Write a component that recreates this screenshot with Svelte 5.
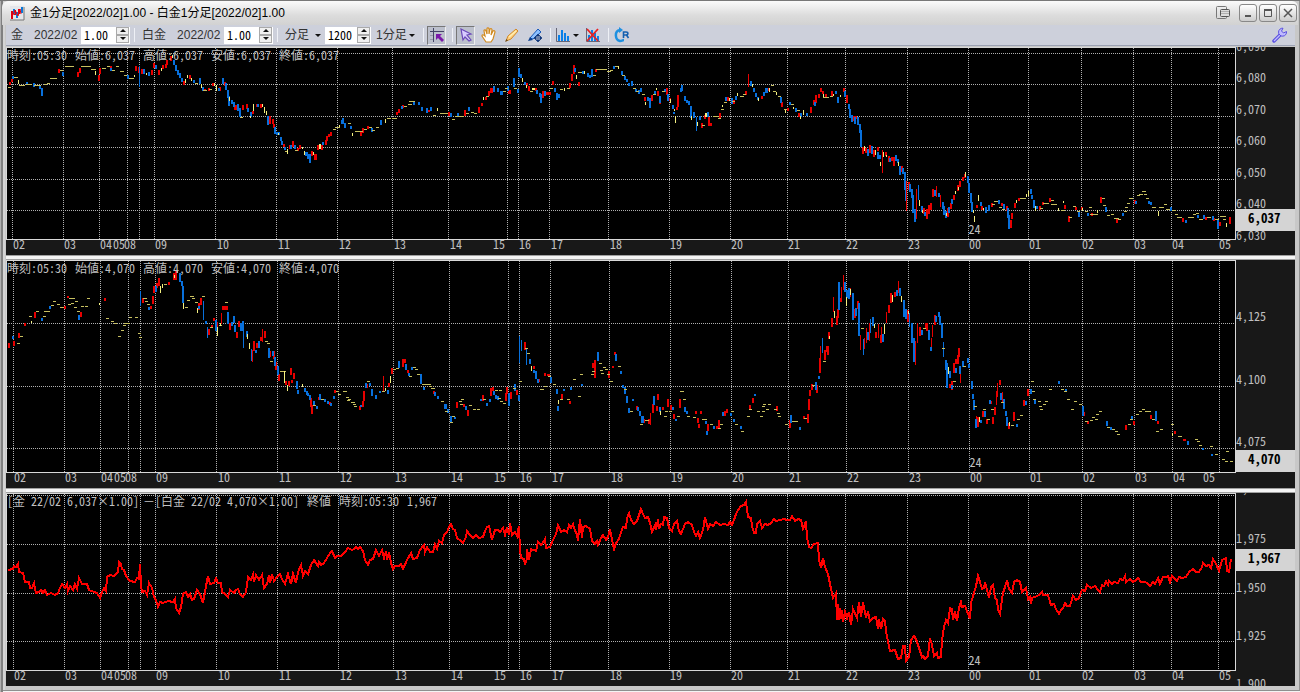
<script>
  const hours = ['02', '03', '04', '05', '08', '09', '10', '11', '12', '13', '14', '15', '16',
    '17', '18', '19', '20', '21', '22', '23', '00', '01', '02', '03', '04', '05']

  // candles: colour, x, y, height and, when it differs from the default, width
  const gold = `y8,87,1 r9,82,3 r11,79,3 b12,76,3 y14,77,1,4 y18,80,4 y19,85,1,6 b26,82,3 y26,84,1,6 b33,83,4 y34,85,1,7
    b39,85,4 b41,88,8,2 y44,84,1 y47,83,1 y50,78,1,7 r58,69,4 y60,70,1 b62,72,4 y65,66,1,9 r77,72,5 r79,68,5 y81,66,1,10
    y91,69,1,5 y95,71,4 r98,75,6 r99,68,6 y102,68,1,4 y107,66,1 r110,66,3 b110,68,3 y112,70,1 y116,66,1 y120,71,1,4
    y124,75,1 b127,75,4 y129,78,1,5 y134,75,2 r135,66,5 r138,67,6 b139,66,21 r141,69,5 b143,69,5 y146,73,2 b148,72,4
    r151,70,5 r153,63,5 b155,65,4 r158,70,5 y161,68,3 r162,65,4 r165,64,4 r166,60,5 r170,56,5 y172,55,3 b173,60,5
    b175,65,6 b177,70,5 b179,73,5 b181,78,4 r183,81,4 y185,79,4 y187,75,3 r189,75,4 y191,78,3 b193,80,3 y195,83,1
    b199,78,6 y201,84,4 b202,87,4 r204,89,2 y203,90,1,4 r208,88,3 y209,89,1 r212,83,3 y214,83,3 y216,85,6 b218,88,3
    r219,87,4 b222,78,6 r224,82,4 b225,83,7 b227,90,8 b228,96,10 y229,97,4 b231,100,4 b233,102,5 r234,107,3 r235,105,5
    b237,104,7 b239,108,9 y240,117,1 r242,105,5 r246,104,5 b247,108,4 b250,112,5 y250,116,2 r252,111,3 y253,104,7
    r256,104,3 b257,104,3 r260,104,4 y262,104,3 y264,107,6 y266,111,4 b267,116,9,2 r269,116,8 r272,119,5 r273,124,4
    b274,127,7 b276,132,3,4 y278,133,2 b280,137,4 b281,141,4 r283,144,3 b284,147,3 y285,151,1 y287,149,5 r289,145,4
    b290,145,4 r292,141,6 b294,145,4 y295,150,1 r297,148,3 r299,145,4 y302,147,2 y304,151,4 b305,152,4,3 b307,154,5,3
    b309,154,9,2 r311,151,5 y313,152,3 r314,154,6,3 r317,145,5 y319,144,5,2 r321,145,5 b322,142,3 r325,140,5 r326,136,5
    r328,134,3 r330,132,4 y333,129,1 y335,127,1 y337,127,1 y339,125,2 b341,120,4 b342,118,6 b344,123,5 y348,123,1
    b350,126,3 y352,133,3 y355,131,1,8 r360,132,4 r362,128,5 y364,129,1 r367,126,3 y369,127,1 b371,128,4 y372,130,1
    y376,127,1 b380,120,5 y385,119,4 y387,118,1,4 y392,118,1,5 r396,112,3 r398,109,4 b401,106,3 r402,105,3 y404,106,1,3
    y408,104,1,4 y409,101,1,6 b413,102,3 b418,102,3 b421,107,4 b426,108,5 r428,110,2 b430,107,4 y433,115,1 y437,108,3
    y440,113,1,8 r448,112,4 b450,113,4 y452,119,1 b457,113,3 y455,116,1,9 r464,110,6 y466,113,1 b468,107,4 y471,112,1
    y474,113,1 r478,107,6 r481,103,3 y483,97,3 r485,97,3 y486,96,1 r488,91,5 r490,88,5,3 b493,86,6 b497,88,4,2
    b500,91,4,3 y503,91,1 y505,88,1 b507,86,5 r508,90,4,3 b513,78,9 y514,88,1 b517,89,4 b518,68,9 b520,74,4 y522,78,4
    b524,82,3 r526,83,3 y526,85,3 r528,86,5 y530,91,1 y532,88,2,3 r535,88,3 b536,90,4 b539,93,4 b540,94,9,2 r542,91,7
    b544,91,5 r546,92,3 r548,92,3,3 y550,88,1 r552,81,4 b554,88,4 b556,93,7 b558,94,4 y560,89,1,3 y564,88,3 y567,88,1,3
    r569,83,5 r571,74,7 r573,65,9 b574,68,4 y576,75,4 r578,82,4 y578,72,1,4 b582,71,3 y584,71,3 b587,73,4 b589,75,3
    b591,69,8,2 y593,75,1 r595,69,3 y596,69,1,11 y607,71,1,4 y610,70,1,3 b613,66,3 y615,66,1,3 y618,66,3 b621,71,4
    y622,75,1 b624,76,4 b626,79,3 b628,83,3 b631,81,5 y633,88,1 b635,89,3 y636,91,1 b638,90,4 b640,88,4 y642,94,1
    r644,97,4 y645,102,3 b647,97,4 b649,98,10 r651,95,6 y653,94,1 b654,91,3 y656,88,2 r657,91,5 b659,96,7 r659,100,4
    y662,91,1 b664,89,3 r666,88,7 b667,94,7 r669,98,3 y670,99,4 b672,105,4 y674,109,2 b673,112,2 y675,116,7 r676,107,3
    r677,95,12,2 b680,88,4 b681,85,6 b684,96,5 b686,100,3 b688,101,4 b690,106,12,2 y691,116,4 b693,112,6 b696,117,14
    y697,122,4 b699,116,4 r701,123,5 y702,125,1 r704,115,4 y705,113,4,2 r708,117,9 b707,112,5 r710,123,3 y713,116,1,6
    y718,118,1 r719,113,5 y721,109,1 y722,105,2 y724,102,1 b725,97,4 r726,97,4,3 y729,98,3 b731,98,6 y732,101,1
    r733,100,4 b735,96,4 y737,93,3 y740,96,1,4 y743,94,1 r745,91,4 r748,74,13 b750,81,5 y752,84,3 b753,88,4 b755,93,4
    b757,97,3 y758,98,3 r761,96,3 b763,92,4 b765,88,5,3 r767,88,3 y769,88,4 y771,85,1 y773,91,1 y776,92,3 y778,96,1
    b780,97,6,2 r781,102,5 y784,109,1 y785,110,3 r787,108,3 b789,102,3 y791,104,1 y793,107,2 b795,108,4 y797,110,1
    r798,113,4 b800,113,4 y800,116,3 y803,110,5 b806,113,3 r810,107,6 r813,100,5 b814,102,4 r815,95,8,2 r818,94,4
    r820,88,4 r822,91,3 y823,94,3 r825,94,4 y823,97,1,6 y830,96,1 r831,91,5 y833,94,2 b835,91,3 b837,97,6 y840,95,2
    r843,88,4 b844,91,6 r846,95,8 b848,104,5 b849,109,9 b851,115,7 r852,116,5 b854,117,7 r853,116,3,4 b857,117,8
    b859,124,9 b860,130,17,2 r862,147,7 y864,146,5 r865,148,5 b867,149,7,2 r869,145,8 b871,146,8 r873,150,7 y875,150,5
    b877,152,7 r877,147,4 b879,155,4 y880,162,4 r882,150,23 y883,152,5 r885,152,4 y886,155,2 r888,156,6 r891,157,4
    b889,158,4 r893,157,9 b895,155,6 b897,159,4 y898,162,4 b899,166,9 r901,166,6 b902,168,6 b904,172,18,2 b905,184,17
    r906,181,30 r908,182,8 b909,184,8,2 b911,189,9 b912,195,18,2 b914,209,13,2 r916,189,30 b918,185,15 y919,200,6
    b921,206,6 y922,210,3 r923,208,6 b924,212,4 r926,209,10 r928,205,9,2 r930,203,7 r932,189,8 b934,190,6 r936,186,11
    b938,193,4 r940,195,12 b942,202,7 b943,206,9 b945,211,7 y946,213,3 r947,208,9 b948,207,6 r950,203,6 b951,199,5
    r953,195,5 y955,191,3 r957,185,6,2 y958,187,3 r959,181,6 r962,177,4 r964,174,4 y965,172,5 b967,176,7 b968,183,10
    b970,193,10 b971,202,10 y974,216,6 y973,210,3 r976,205,3 y978,195,6 b980,202,4 r981,206,4 y983,208,2 b985,207,6
    b988,205,6,2 r991,203,4 y992,204,1 y994,201,1,4 b998,200,4 y999,207,1 r1001,203,3 b1003,204,6 y1002,209,1
    r1006,206,5 b1007,208,10 b1008,215,14,2 r1010,220,8 r1011,213,6 r1014,203,5 y1016,200,3 r1018,198,3 y1020,198,1,6
    y1026,194,3 y1028,191,5 b1030,189,5 b1031,195,4 b1033,200,8,2 y1035,206,5 b1036,206,3 r1039,206,4 y1040,208,1
    r1042,202,3 y1043,203,1,6 r1049,198,4 y1051,200,1 y1051,204,1,6 y1058,208,3 y1063,201,2 r1064,205,4 y1061,210,1,4
    r1068,216,6 y1069,217,1,3 y1073,206,1 r1075,207,3 b1078,212,5 y1077,211,1 r1081,207,3 y1082,208,3 y1085,211,1
    b1087,213,3 y1089,207,1 r1091,213,3 y1090,214,1,8 y1097,210,3 r1100,197,6,2 y1102,198,1 y1103,205,1 b1105,207,5
    y1107,215,1 y1111,214,1 r1116,219,4 y1114,218,1,5 y1118,219,1 b1122,213,3 y1124,211,1 y1125,207,1,3 y1127,203,1
    y1129,198,1,4 r1134,200,4 b1135,201,3 y1137,195,1 y1139,194,1,4 y1142,191,1,4 y1144,194,1 y1146,198,1 b1148,201,3
    b1150,202,3 y1152,207,1,4 y1158,211,5 y1159,207,1,5 y1164,204,1 y1166,209,1,4 b1170,207,4 y1172,210,1,4 y1175,214,1
    y1177,217,1,5 r1182,218,4 b1185,220,3 y1188,217,1,6 y1193,214,1 y1196,213,1 b1197,215,3 y1199,219,1,4 b1203,215,4
    r1205,217,3 y1207,217,1,4 b1212,216,4 r1213,218,3 y1215,219,1,4 b1217,219,10,2 r1219,222,4 y1220,216,1,6 y1223,219,1
    y1226,223,4 r1229,217,7`

  const platinum = `r8,343,5 b12,336,3 r13,341,5 y17,343,1 r18,333,5 y20,336,1 r24,323,3 y29,316,1 y31,321,2 r34,312,6
    y36,311,1 b41,318,3 y43,316,1 y44,311,1,6 b49,306,3 y51,305,1 y53,301,1,3 y57,304,1 y60,307,1,4 r64,306,3 r67,296,2
    y69,298,1 y68,304,1 y71,303,1 y72,298,1 y75,301,1 y74,307,1 y77,311,1 r80,312,5 b78,315,5 y81,306,1 y85,306,1
    y87,298,1 y99,303,2 r104,298,3 y106,318,1 y111,321,1 y114,323,1 y118,336,1 y121,330,1 y123,325,1 y124,323,1,6
    y129,317,1 y135,317,1 y138,333,1 y139,337,1 b140,291,15 r142,298,5 y143,298,1,4 y145,301,1 y147,304,1 b148,307,3
    r150,306,3 r152,296,8 r153,286,7,2 b155,286,6 r156,283,5 r158,278,8 y160,286,7 y162,284,4 y164,284,1,3 r168,282,3
    r173,273,7 y174,275,3 r175,270,10 y177,271,2 b179,273,9 b181,281,5 b182,286,17,2 y183,303,6 y185,307,1 y187,300,1
    y190,296,1,4 y192,298,1 y195,302,1 r198,303,7 y197,308,5 b198,306,3 r200,298,7 y202,296,1 b203,301,19 b205,321,3
    b207,327,11 r208,329,6 y210,327,1 r211,325,3 r213,318,3 b215,320,11,2 r216,322,6 y217,327,9 y219,325,1 y220,323,3
    r221,313,11 r222,306,4,6 y225,302,1 b227,312,12,2 r229,323,7,2 b231,322,4 b233,316,7 b234,325,7 r236,332,6
    r238,321,6 b240,323,8 b242,321,10 b243,322,26 b246,331,6 y247,334,5 y249,343,6 b251,349,12 r252,350,12 r253,341,10
    r256,343,5 b255,350,3 b258,341,7 r260,337,4 r262,329,13 r264,331,7 y265,341,1 y267,343,1 b268,348,10 r269,351,6
    y270,361,1 b272,351,5 r273,351,8 b274,357,9,2 r275,362,8 b277,366,9,2 r278,374,7 y280,371,1 y282,371,1,4 y284,371,12
    r285,381,4 y287,385,6 r288,381,5 r290,368,7 r291,380,3 r293,373,6 b296,381,8 b297,390,4 y302,384,3 b304,388,4
    b306,391,4 b307,393,3 b309,395,5 r310,398,9 b313,401,5 r311,405,9 y313,405,1 b316,406,3 r318,397,3 b319,394,6,2
    y321,399,1 b324,399,3 b327,401,3 r329,402,3 b330,403,3 b333,396,3 r334,390,3 y336,391,1 y338,394,1 y343,391,1,4
    y346,397,1 y347,400,1 y348,399,1 y351,402,1,4 y353,404,1 y354,406,1 r359,406,4 b360,405,2 r362,401,6 r363,391,10
    b365,383,5 r366,384,4 y367,381,1 b369,383,3 b371,389,7 b375,395,4 b379,391,2 r383,376,15 y382,391,1 y385,388,3
    b387,390,4 r388,383,4 y390,376,7 r391,368,6 y393,369,1 y396,368,1 b398,361,7 r402,359,8,2 r404,359,4 b405,364,6
    r407,370,3 b408,373,3 y409,376,1 b411,367,3 y413,367,1 y415,369,1 y417,374,1 b420,374,10 y422,384,1,5 b423,387,3
    y426,384,1,5 y429,386,1 r433,391,3 y431,388,1,4 b434,392,4 b437,396,3 y441,401,1 b444,404,5,3 b447,409,4,2
    y445,411,1 b450,416,6 y450,422,1 b454,417,2 y452,416,1 r456,402,6,2 y459,401,1 y461,399,1 y460,404,1 r463,404,3
    b465,406,4 r467,410,6 y469,405,1 y473,409,1 y477,409,1 b480,399,2 r482,395,6 y483,399,1 b486,403,3 b489,399,3
    r490,388,8 r492,387,4 b493,391,4 y495,390,1,3 b497,396,4 b495,395,4 y498,398,1 y499,390,1 y500,401,1 y503,403,1
    r505,393,8 r506,387,7,2 b508,393,13,2 r510,392,7 y513,388,1,3 b514,384,7 r516,390,5 b518,395,6 y519,381,1
    b519,336,27 b521,340,11 r524,342,8 b526,349,16 y525,348,1 y527,353,1 b529,359,5 y531,366,5 b533,370,3 r533,366,3
    b535,371,8,2 b537,379,4 r538,379,3 y540,389,1,4 y544,386,1 r544,373,3 r547,374,2,3 b550,377,6 y548,376,1 y553,384,1
    b556,389,5 y558,400,4 b557,406,5 r561,394,5 y560,399,1 b563,389,2 y567,399,1 r569,401,3 b570,387,3 y573,379,1
    y578,396,1 y580,374,1 b581,384,2 y591,374,1 r592,363,5 y592,371,1,3 r594,360,18,2 b597,352,9,2 y599,363,1 y600,370,1
    y603,367,1 y601,373,1 y605,369,1 y607,374,1 r608,371,7 y610,381,1 r612,366,2 r614,352,3 b615,354,7 y618,366,1
    b620,371,3 b622,385,3 b624,387,7 y624,389,1,3 b626,396,7,2 b628,408,5 y630,411,1 b632,399,2 r636,406,4 b637,407,4
    b639,411,5 b641,416,7,3 y640,424,1 r643,419,4 y645,420,1,4 r648,419,5 r650,413,12 r652,404,9 b653,396,9 r656,406,5
    r657,394,6 b659,407,5 y660,411,4 r662,407,3 y664,416,1 y665,411,1 r667,399,8 y669,411,1 r670,405,5 b672,407,3
    r673,414,5 b675,419,2 y677,416,1 r679,399,9 y680,391,1,4 y683,399,1 b684,407,5 b686,411,3 y687,416,1,3 y693,417,1
    r695,411,3 r700,411,3 r697,418,5 r698,424,4 y702,419,1 y704,419,1,3 b705,421,3 r707,424,7 b706,431,4 y710,424,1
    b713,426,3 r716,426,3,2 r718,420,8,2 y718,428,1,3 b722,412,4 y720,424,1 r724,411,5,2 r726,409,4 b730,413,3
    y731,411,1 b733,419,3 y735,424,1,3 b740,426,3 y741,431,1 y747,416,1 r749,405,5 y749,409,1 r752,398,5 b754,394,2
    y757,411,1 y760,416,1,3 y762,406,1,3 y762,411,1 y763,404,1 y766,409,1 y768,404,1 y774,409,1 r776,406,5 y777,413,1
    y778,416,1 y785,424,1 b790,415,8 r789,420,8 y792,421,1 y795,421,1 b799,427,3 r803,416,3 y804,418,1 r807,414,9
    r808,399,11,2 r809,390,6 r811,384,6,2 y812,385,1 b815,382,8 r816,385,8 b818,376,3 r819,358,15,2 r820,346,16
    b822,338,15 r824,350,10 y823,361,1 r826,346,6 r827,346,9 r828,332,7 y829,336,3 r831,318,9 r833,297,15 y834,311,7
    r836,316,9 r837,309,9 b838,282,28,2 r840,298,4 r841,287,14 r843,275,15 b844,282,10 b846,290,8 y846,297,9
    b848,288,11,2 r849,288,9 y850,289,6 b852,293,27,2 r854,309,9 b855,308,8 r857,301,8 b858,303,33,2 r860,335,15
    y861,328,1 b863,339,16 r864,338,11 r866,328,15 b867,332,8 r869,323,18 b870,319,14 b872,317,9,2 y874,324,4 r875,332,6
    r878,324,14 r880,335,8 r881,327,11 b882,334,8 y884,324,10 r886,312,11 r888,305,8 r890,293,10,2 y892,295,7 r894,292,5
    b896,290,6 r898,281,12 b899,288,8,2 y901,296,6 b903,300,17,2 b905,309,10 r907,310,12,2 y908,311,3 b909,313,14
    b911,323,20,2 b913,338,24,2 r915,341,24 r917,323,20 r919,327,9 b921,330,5 y923,328,1 r925,323,5 r926,323,8
    b928,330,10 b930,347,4 r931,338,11 r932,325,12 r934,315,10 b935,316,6 b938,312,5 b939,316,9 b941,323,15,2 y942,348,1
    b943,342,15 b945,360,10 b946,363,25,2 y948,367,7 b949,371,7 r949,384,4 b951,385,4 r951,381,9 y953,381,1 r953,363,10
    r955,359,5 b955,368,5 r957,355,9 r958,348,9 b959,366,8 r960,372,11 b962,361,6 y963,366,1 b967,358,5 b968,364,4
    b971,381,8 b972,394,5 b973,400,10 y974,406,1 r976,416,12 b975,419,9 r977,417,10 y979,417,5 b980,420,3 r982,411,6
    y983,409,1 b984,411,6 r986,419,5 y987,419,1 b989,400,4 r990,401,3 y991,409,1 r992,417,7 r994,407,8 r996,391,14
    r997,383,14 r999,380,5 b1000,393,7 r1002,392,11 y1001,402,1,3 b1003,399,10 b1005,411,5 b1006,417,9 r1008,423,6
    y1009,422,4 y1011,425,1 r1013,412,9 b1016,424,3 y1017,419,1 y1020,415,1 r1023,400,6 b1025,401,4 r1027,389,7
    b1030,389,5 y1031,381,1 y1032,391,1 b1034,399,5 y1033,399,1 y1038,401,1 y1039,406,1 y1040,409,1 y1043,404,1
    y1045,401,1 y1049,389,1 b1058,381,3 y1061,389,1 y1064,391,1 b1065,389,2 y1067,399,1 y1071,409,1 y1074,401,1
    y1079,404,1 b1082,406,10 r1083,412,4 y1085,421,1 r1087,421,3 y1090,420,1 y1092,417,1 y1095,419,1 y1096,414,1
    y1099,411,1 b1106,421,5 y1107,427,1 b1110,427,3 y1112,429,1 y1115,431,1 y1117,434,1 r1125,425,5 y1128,424,1
    b1131,416,3 y1130,419,1,3 r1133,421,4 y1136,414,1 y1139,411,1 y1142,409,1 y1145,411,1 y1148,411,1 r1150,415,4
    y1152,419,1 b1155,411,10 r1157,421,3 y1156,431,1 y1160,429,1 y1171,424,1 y1172,433,3 r1174,431,3 y1178,436,1,4
    r1183,439,2,3 b1187,441,4 y1195,439,1 y1197,441,1 y1199,445,1 b1202,448,2 y1210,446,1 b1211,454,2 y1215,454,1
    y1222,459,1 y1225,461,1 y1226,451,1 y1230,461,1`

  const spread = `8,570 13,569 14,566 16,567 18,564 19,572 23,573 25,582 29,582 30,588 32,588 34,583 36,593 39,592 41,590
    43,593 45,590 47,595 51,593 55,595 58,593 60,588 62,584 65,588 67,584 68,591 70,586 73,590 75,584 77,589 79,578 82,584 87,584
    89,590 94,592 97,593 100,598 102,592 104,588 106,591 107,577 110,575 114,576 118,572 119,562 121,564 122,569 124,570
    126,576 130,581 135,582 137,578 139,579 140,564 141,585 142,592 145,591 147,595 149,583 152,588 154,597 156,600
    158,607 160,602 163,603 168,601 173,602 175,599 176,608 179,613 181,607 183,594 186,592 188,597 190,594 192,600
    194,599 197,590 200,594 203,603 206,586 208,576 210,584 214,583 216,578 218,583 221,583 222,592 225,594 228,597
    230,590 234,593 236,590 238,589 240,594 243,597 246,592 248,577 251,580 253,575 254,582 256,575 259,580 262,575
    264,588 267,584 269,575 270,583 272,574 274,581 277,577 280,574 282,579 285,584 288,574 291,584 293,574 296,583
    298,572 301,565 303,576 305,571 308,574 311,565 314,560 318,566 319,562 321,565 324,563 327,558 330,553 332,551
    335,558 337,556 341,556 345,552 348,548 352,550 354,549 356,547 358,549 360,547 363,551 365,560 368,565 370,560
    373,559 376,550 379,556 382,550 384,558 386,551 387,560 389,552 391,563 393,569 395,566 399,566 401,564 403,569
    407,560 411,553 413,559 417,558 420,550 424,545 425,552 427,547 430,552 433,552 435,544 437,549 439,541 442,543
    444,535 447,532 449,527 451,524 453,529 455,530 457,538 461,541 463,543 466,537 467,531 470,535 473,538 476,535
    479,538 483,537 485,531 487,527 489,526 491,535 492,540 495,530 498,530 500,532 503,528 505,535 507,527 509,535
    510,523 512,535 515,532 517,536 519,526 520,550 521,558 524,559 525,565 527,558 527,549 529,560 531,549 536,551
    538,542 541,545 544,541 545,539 546,548 550,547 553,540 556,534 558,525 561,532 564,530 567,532 569,525 571,528
    573,524 575,531 577,534 578,541 580,519 582,538 583,527 586,526 590,529 592,541 595,544 597,541 598,545 601,538
    603,535 606,540 608,537 610,529 612,540 614,549 616,543 619,539 621,532 623,527 626,528 627,518 629,513 631,520
    634,524 637,521 639,515 641,509 643,514 645,518 648,517 650,523 652,532 655,525 656,530 658,519 659,529 661,524
    663,525 664,517 667,518 669,528 672,531 674,524 677,521 679,531 681,534 683,529 685,524 688,522 692,525 694,532
    696,536 698,532 700,538 703,530 705,517 708,529 710,524 713,526 716,522 720,525 724,524 728,525 730,522 732,525
    734,520 736,514 738,510 741,506 744,505 746,502 748,517 751,518 752,526 754,533 756,533 757,524 760,521 762,528
    765,524 768,525 771,523 774,519 776,521 780,520 784,519 787,520 790,520 792,516 795,521 798,519 801,520 803,529
    806,521 807,538 809,547 811,548 814,544 818,543 819,560 821,568 823,558 825,567 828,574 831,589 833,598 836,593
    837,620 838,604 839,620 840,608 841,619 842,610 843,622 845,612 847,618 849,612 851,625 853,609 857,618 859,602
    861,617 863,602 866,618 868,611 870,621 873,618 876,617 878,629 879,619 881,629 883,619 885,621 886,631 888,642
    890,651 895,650 898,659 901,658 903,646 905,646 906,661 909,657 911,640 914,636 916,639 919,648 922,657 923,656
    925,659 928,656 930,638 932,645 934,656 937,653 938,658 941,657 942,640 944,627 946,620 948,623 950,608 952,609
    953,620 955,611 957,621 959,608 961,602 962,607 965,606 967,611 970,619 971,603 974,593 976,586 978,576 980,582
    982,589 984,588 985,582 987,590 989,598 991,587 993,585 995,598 997,600 998,610 1000,614 1002,600 1003,593 1005,587
    1007,580 1009,589 1012,593 1014,582 1017,580 1020,582 1022,592 1026,588 1028,599 1030,597 1031,604 1032,598 1037,596
    1039,595 1042,592 1043,595 1048,595 1051,605 1054,604 1056,609 1059,614 1061,610 1063,608 1065,603 1067,606 1070,606
    1073,596 1076,600 1079,598 1082,590 1085,591 1087,585 1091,588 1095,586 1098,590 1100,592 1102,585 1104,586 1106,581
    1108,585 1109,581 1112,584 1114,582 1118,583 1120,579 1123,580 1125,576 1126,582 1130,579 1133,582 1136,580 1138,578
    1141,582 1145,582 1147,583 1150,586 1153,582 1155,584 1158,578 1160,584 1163,577 1166,577 1168,576 1170,582 1172,576
    1175,579 1177,581 1179,577 1182,578 1186,577 1189,572 1193,569 1196,572 1199,572 1202,567 1203,563 1206,566 1209,565
    1211,568 1213,559 1216,564 1219,571 1222,560 1226,558 1227,571 1229,572 1231,559`

  const charts = [
    {
      id: 'gold', top: 47, height: 208, candles: gold,
      legend: ['時刻:05:30', '始値:6,037', '高値:6,037', '安値:6,037', '終値:6,037'],
      cols: [12, 63, 99, 127, 139, 154, 215, 276, 337, 392, 448, 507, 518, 549, 608, 669, 730, 787, 845, 907, 968, 1028, 1081, 1133, 1171, 1218],
      rows: [53, 84, 116, 147, 179, 210],
      ticks: [13, 64, 100, 113, 124, 155, 217, 278, 339, 394, 450, 493, 519, 551, 610, 670, 731, 788, 846, 908, 969, 1029, 1082, 1134, 1172, 1219],
      prices: [['6,090', 46], ['6,080', 77], ['6,070', 109], ['6,060', 140], ['6,050', 172], ['6,040', 203], ['6,030', 235]],
      last: '6,037', lastY: 220, dayX: 969
    },
    {
      id: 'platinum', top: 260, height: 228, candles: platinum,
      legend: ['時刻:05:30', '始値:4,070', '高値:4,070', '安値:4,070', '終値:4,070'],
      cols: [13, 64, 100, 128, 140, 155, 216, 277, 338, 393, 449, 508, 519, 550, 609, 670, 731, 788, 846, 908, 969, 1029, 1082, 1134, 1172, 1219],
      rows: [323, 386, 448],
      ticks: [14, 65, 101, 114, 125, 156, 218, 279, 340, 395, 451, 494, 520, 552, 611, 671, 732, 789, 847, 909, 970, 1030, 1083, 1135, 1173, 1203],
      prices: [['4,125', 316], ['4,100', 379], ['4,075', 441]],
      last: '4,070', lastY: 461, dayX: 970
    },
    {
      id: 'spread', top: 493, height: 193, line: spread,
      legend: ['[金 22/02 6,037×1.00]', '－[白金 22/02 4,070×1.00]', '終値', '時刻:05:30', '1,967'],
      cols: [13, 64, 100, 128, 140, 155, 216, 277, 338, 393, 449, 508, 519, 550, 608, 669, 730, 787, 845, 907, 968, 1028, 1081, 1133, 1171, 1218],
      rows: [495, 544, 593, 641],
      ticks: [14, 65, 101, 114, 125, 156, 218, 279, 340, 395, 451, 494, 520, 552, 610, 670, 731, 788, 846, 908, 969, 1029, 1082, 1134, 1172, 1219],
      prices: [['2,000', 488], ['1,975', 538], ['1,950', 587], ['1,925', 635], ['1,900', 683]],
      last: '1,967', lastY: 560, dayX: 969
    }
  ]

  function shape(list, colour, flat) {
    return list.trim().split(/\s+/)
      .filter(c => c[0] == colour)
      .map(c => c.slice(1).split(',').map(Number))
      .filter(([, , h]) => colour != 'y' || (h == 1) == flat)
      .map(([x, y, h, w]) => {
        w = w || (colour == 'y' ? (h == 1 ? 3 : 1) : (h > 10 ? 1 : 2))
        return `M${x} ${y}h${w}v${h}h${-w}z`
      })
      .join('')
  }

  const left = x => `${(x - 6) / 12.3}%`

  let goldRatio = '1.00'
  let platinumRatio = '1.00'
  let bars = '1200'
  let tool = 'select'

  const step = (value, by) => (Number(value) + by).toFixed(2)
</script>

<main>
  <header>
    <svg class="logo" width="16" height="16" viewBox="0 0 16 16">
      <rect x="1" y="1" width="14" height="14" fill="#e4e6ea" />
      <path d="M1 15h14V2" fill="none" stroke="#777" />
      <path d="M3 14V6M6 5v5M10 9V4" stroke="#e00010" stroke-width="2" />
      <path d="M5 9V4M8 13V7M13 8V2" stroke="#0878d8" stroke-width="2" />
      <path d="M4 10l2-5 3 6 2-7 1 5" fill="none" stroke="#e00010" />
    </svg>
    <h1>金1分足[2022/02]1.00 - 白金1分足[2022/02]1.00</h1>
    <svg class="detach" width="15" height="14" viewBox="0 0 15 14" fill="none" stroke="#777">
      <rect x=".5" y=".5" width="10" height="12" rx="1" />
      <rect x="4.500" y="3.500" width="9" height="7" rx="1" fill="#ddd" stroke="#555" />
      <path d="M5 5.500h8M5 7.500h8" stroke="#b0b0b0" />
    </svg>
    <button class="win" aria-label="最小化"><svg width="10" height="10"><path d="M2 8h6" stroke="#555" stroke-width="2" /></svg></button>
    <button class="win" aria-label="最大化"><svg width="10" height="10"><path d="M1.500 2h7v6.500h-7z" fill="none" stroke="#555" /><path d="M1 2h8" stroke="#555" stroke-width="2" /></svg></button>
    <button class="win" aria-label="閉じる"><svg width="10" height="10"><path d="M1 1l8 8M9 1L1 9" stroke="#555" stroke-width="1.500" /></svg></button>
  </header>

  <nav>
    <label class="name" for="gold-ratio">金</label>
    <span class="month">2022/02</span>
    <span class="spin">
      <input id="gold-ratio" bind:value={goldRatio}>
      <button aria-label="増やす" on:click={() => goldRatio = step(goldRatio, 0.01)}><i class="up"></i></button>
      <button aria-label="減らす" on:click={() => goldRatio = step(goldRatio, -0.01)}><i class="down"></i></button>
    </span>
    <hr>
    <label class="name" for="platinum-ratio">白金</label>
    <span class="month">2022/02</span>
    <span class="spin">
      <input id="platinum-ratio" bind:value={platinumRatio}>
      <button aria-label="増やす" on:click={() => platinumRatio = step(platinumRatio, 0.01)}><i class="up"></i></button>
      <button aria-label="減らす" on:click={() => platinumRatio = step(platinumRatio, -0.01)}><i class="down"></i></button>
    </span>
    <hr>
    <span class="drop"><select aria-label="足種"><option>分足</option></select><i class="down"></i></span>
    <span class="spin bars">
      <input aria-label="本数" bind:value={bars}>
      <button aria-label="増やす" on:click={() => bars = Number(bars) + 100}><i class="up"></i></button>
      <button aria-label="減らす" on:click={() => bars = Number(bars) - 100}><i class="down"></i></button>
    </span>
    <span class="drop wide"><select aria-label="間隔"><option>1分足</option></select><i class="down"></i></span>
    <hr>
    <button class="tool pressed" aria-label="カーソル追従">
      <svg width="16" height="16" viewBox="0 0 16 16"><path d="M4.500 1v14M1 4.500h14" stroke="#446" /><path d="M1 8.500h3M1 12.500h3" stroke="#99a" /><path d="M7 7h6l-2 2 4 4-2 2-4-4-2 2z" fill="#7a18a8" /></svg>
    </button>
    <hr>
    <button class="tool" class:pressed={tool == 'select'} aria-label="選択" on:click={() => tool = 'select'}>
      <svg width="16" height="16" viewBox="0 0 16 16"><path d="M3 2l10 5-4 1 4 5-2 1-4-4-2 3z" fill="#d8ccff" stroke="#6a48b8" stroke-width="1.200" /></svg>
    </button>
    <button class="tool" class:pressed={tool == 'hand'} aria-label="移動" on:click={() => tool = 'hand'}>
      <svg width="16" height="16" viewBox="0 0 16 16"><path d="M5 15L1 9c0-2 2-1 3 0L3 4c0-2 2-1 2 0l1 3V2c0-2 2-1 2 0v5l1-5c1-1 2 0 2 1l-1 5 2-4c1-1 2 0 2 1l-2 7-2 3z" fill="#fff" stroke="#d08a20" stroke-width="1.200" /></svg>
    </button>
    <button class="tool" class:pressed={tool == 'pencil'} aria-label="描画" on:click={() => tool = 'pencil'}>
      <svg width="16" height="16" viewBox="0 0 16 16"><path d="M2 14l2-5 8-7 2 2-7 8z" fill="#ffd080" stroke="#d08828" /><path d="M5 10l7-6" stroke="#fff0b0" stroke-width="1.500" /><path d="M1 15l1.500-3 1.500 1.500z" fill="#6a4818" /></svg>
    </button>
    <button class="tool" class:pressed={tool == 'pen'} aria-label="線の編集" on:click={() => tool = 'pen'}>
      <svg width="16" height="16" viewBox="0 0 16 16"><path d="M3 11l8-9 3 3-8 7z" fill="#8cc0ff" stroke="#1858b8" /><path d="M1 14l2-4 3 3z" fill="#0c4090" /><path d="M11 7v8M7 11h8M11 7l-2 2h4zM11 15l-2-2h4zM7 11l2-2v4zM15 11l-2-2v4z" fill="#103878" stroke="#103878" stroke-width=".6" /></svg>
    </button>
    <hr>
    <button class="tool more" aria-label="テクニカル">
      <svg width="16" height="16" viewBox="0 0 16 16"><path d="M1.500 1v13.500H15" fill="none" stroke="#667" /><path d="M4 14V8M7 14V3M10 14V6M13 14V9" stroke="#0a80e8" stroke-width="2" /></svg>
      <i class="down"></i>
    </button>
    <button class="tool" aria-label="テクニカル削除">
      <svg width="16" height="16" viewBox="0 0 16 16"><path d="M1.500 1v13.500H15" fill="none" stroke="#667" /><path d="M4 14V8M7 14V3M10 14V6M13 14V9" stroke="#0a80e8" stroke-width="2" /><path d="M2 2l11 12M13 2L2 14" stroke="#e82020" stroke-width="1.800" /></svg>
    </button>
    <hr>
    <button class="tool" aria-label="再読込">
      <svg width="16" height="16" viewBox="0 0 16 16"><path d="M6 3C0 4 1 13 6 14c2 0 3-1 4-1" fill="none" stroke="#1e90e0" stroke-width="2.500" /><path d="M5 0l4 3-4 3z" fill="#1e90e0" /><path d="M9.500 11V5H12c2.500 0 2.500 3 0 3h-2M12.500 8l2 3" fill="none" stroke="#1460b0" stroke-width="1.600" /></svg>
    </button>
    <button class="tool setup" aria-label="設定">
      <svg width="16" height="16" viewBox="0 0 16 16"><path d="M2 14l7-7" stroke="#5a50e0" stroke-width="3.500" stroke-linecap="round" /><path d="M2 14l7-7" stroke="#c0bcff" stroke-width="1.200" /><path d="M14.500 4.500A4 4 0 1 1 11 1.200L9.500 4l2 2z" fill="#c0bcff" stroke="#5a50e0" /></svg>
    </button>
  </nav>

  {#each charts as chart}
    <section class={chart.id} style="flex-grow: {chart.height}">
      <div class="plot">
        <svg viewBox="7 {chart.top + 1} 1228 {chart.height - 17}" preserveAspectRatio="none" shape-rendering="crispEdges">
          <g class="grid">
            {#each chart.cols as x}
              <path d="M{x + 0.5} {chart.top + 1}v{chart.height}" />
            {/each}
            {#each chart.rows as y}
              <path d="M7 {y + 0.5}h1228" />
            {/each}
          </g>
          {#if chart.candles}
            <path class="up-bar" d={shape(chart.candles, 'r')} />
            <path class="down-bar" d={shape(chart.candles, 'b')} />
            <path class="dash" d={shape(chart.candles, 'y', true)} />
            <path class="same-bar" d={shape(chart.candles, 'y', false)} />
          {:else}
            <polyline points={chart.line} />
          {/if}
        </svg>
        <p class="legend">
          {#each chart.legend as part}<span>{part}</span>{/each}
        </p>
        <span class="day" style="left: {left(chart.dayX)}">24</span>
      </div>
      <div class="scale">
        {#each chart.prices as [text, y]}
          <span style="top: {(y - chart.top) / chart.height * 100}%">{text}</span>
        {/each}
        <strong style="top: {(chart.lastY - chart.top) / chart.height * 100}%">{chart.last}</strong>
      </div>
      <div class="axis">
        {#each hours as hour, i}
          <span style="left: {left(chart.ticks[i])}">{hour}</span>
        {/each}
      </div>
    </section>
  {/each}
</main>

<style>
:global(body) {
  margin: 0;
}

main {
  box-sizing: border-box;
  display: flex;
  flex-direction: column;
  height: 100vh;
  min-height: 400px;
  padding: 0 5px 6px 6px;
  background: #c8c8c8;
  box-shadow: inset 0 1px #777, inset 1px 0 #b0b0b0, inset 3px 0 #808080, inset 0 -1px #f4f4f4, inset -1px -2px #909090, inset 5px 0 #d4d4d4;
  color: #333;
  font: 12px/16px "Liberation Sans", "Noto Sans CJK JP", sans-serif;
}

header {
  display: flex;
  align-items: center;
  gap: 2px;
  height: 24px;
  margin: 1px -3px 0 -4px;
  padding: 0 1px 0 7px;
  border-radius: 6px 6px 0 0;
  background: linear-gradient(#fafafa, #dcdcdc 60%, #d2d2d2);
}

h1 {
  flex: 1;
  margin: 0 0 0 3px;
  overflow: hidden;
  color: #000;
  font-size: 12px;
  font-weight: normal;
  white-space: nowrap;
}

.detach {
  margin-right: 6px;
}

button {
  box-sizing: border-box;
  display: flex;
  align-items: center;
  justify-content: center;
  margin: 0;
  padding: 0;
}

.win {
  width: 18px;
  height: 18px;
  border: 1px solid #888;
  border-radius: 3px;
  background: linear-gradient(#fff, #ccc);
}

nav {
  display: flex;
  align-items: center;
  height: 20px;
  padding: 0 6px 0 5px;
  border-bottom: 1px solid #9ca2b4;
  margin-bottom: 1px;
  background: #cdd0db;
  white-space: nowrap;
}

.month {
  width: 47px;
  margin-left: 11px;
  color: #333;
}

hr {
  width: 1px;
  height: 14px;
  margin: 0 7px 0 4px;
  border: 0;
  background: #eef0f6;
}

.spin {
  display: grid;
  grid-template: 8px 8px / 1fr 13px;
  box-sizing: border-box;
  width: 49px;
  height: 17px;
  padding: 0 1px 0 0;
  background: #fff;
}

.bars {
  width: 46px;
}

.spin input {
  grid-row: 1 / 3;
  box-sizing: border-box;
  width: 100%;
  min-width: 0;
  padding: 0 0 0 3px;
  border: 0;
  outline: 0;
  background: none;
  color: #000;
  font: 12px/16px "Noto Sans Mono CJK JP", "Noto Sans CJK JP", monospace;
}

.spin button {
  border: 1px solid #aaa;
  background: #f0f0f0;
}

.up, .down {
  width: 0;
  height: 0;
  border: 3px solid transparent;
}

.up {
  border-top: 0;
  border-bottom-color: #111;
}

.down {
  border-bottom: 0;
  border-top-color: #111;
}

.drop {
  display: flex;
  align-items: center;
  width: 40px;
}

.wide {
  width: 43px;
  margin-left: 5px;
}

.drop select {
  appearance: none;
  width: 100%;
  padding: 0;
  border: 0;
  background: none;
  color: #333;
  font: inherit;
}

.drop .down {
  flex: none;
  margin-right: 4px;
  pointer-events: none;
}

.tool {
  width: 19px;
  height: 19px;
  margin-right: 4px;
  border: 1px solid transparent;
  background: none;
}

.tool svg {
  flex: none;
}

.tool + hr {
  margin-left: 2px;
}

hr + .tool {
  margin-left: -4px;
}

.pressed {
  border-color: #777 #eee #eee #777;
  background: #bcc0cc;
}

.more {
  gap: 2px;
  width: 25px;
}

.setup {
  margin: 0 0 0 auto;
}

section {
  display: grid;
  flex-basis: 0;
  grid-template: minmax(0, 1fr) 15px / minmax(0, 1fr) 59px;
  min-height: 0;
  overflow: hidden;
  background: #181818;
  color: #c0c0c0;
  font: 12px/12px "Noto Sans Mono CJK JP", "Noto Sans CJK JP", monospace;
}

section + section {
  position: relative;
  margin-top: 5px;
  overflow: visible;
}

/* splitter between two panels */
section + section::before {
  content: "";
  position: absolute;
  top: -5px;
  right: 0;
  left: 0;
  box-sizing: border-box;
  height: 5px;
  border: solid #a0a0a0;
  border-width: 1px 0;
  background: #f4f4f4;
}

.plot {
  position: relative;
  border: 1px solid #d8d8d8;
  background: #000;
  overflow: hidden;
}

.plot svg {
  position: absolute;
  width: 100%;
  height: 100%;
}

.grid {
  fill: none;
  stroke: #b0b0b0;
  stroke-dasharray: 1 1;
}

.up-bar {
  fill: #e80000;
}

.down-bar {
  fill: #0870dc;
}

.dash {
  fill: #c8c060;
}

.same-bar {
  fill: #f4f080;
}

polyline {
  fill: none;
  stroke: #f00;
  stroke-width: 2;
}

.legend {
  position: relative;
  display: flex;
  margin: 1px 0 0;
  white-space: pre;
}

.legend span {
  width: 68px;
}

.spread .legend span {
  width: auto;
  margin-right: 8px;
}

.spread .legend span:first-child {
  margin-right: 4px;
}

.day {
  position: absolute;
  bottom: 4px;
}

.scale {
  position: relative;
  grid-row: 1 / 3;
  grid-column: 2;
  overflow: hidden;
}

.scale span {
  position: absolute;
  left: 0;
  margin-top: -6px;
}

.scale strong {
  position: absolute;
  right: 0;
  left: 0;
  height: 22px;
  margin-top: -11px;
  padding-left: 12px;
  background: #d4d4d4;
  color: #000;
  font-size: 13px;
  line-height: 18px;
}

.axis {
  position: relative;
  grid-row: 2;
}

.axis span {
  position: absolute;
  top: -2px;
}
</style>
